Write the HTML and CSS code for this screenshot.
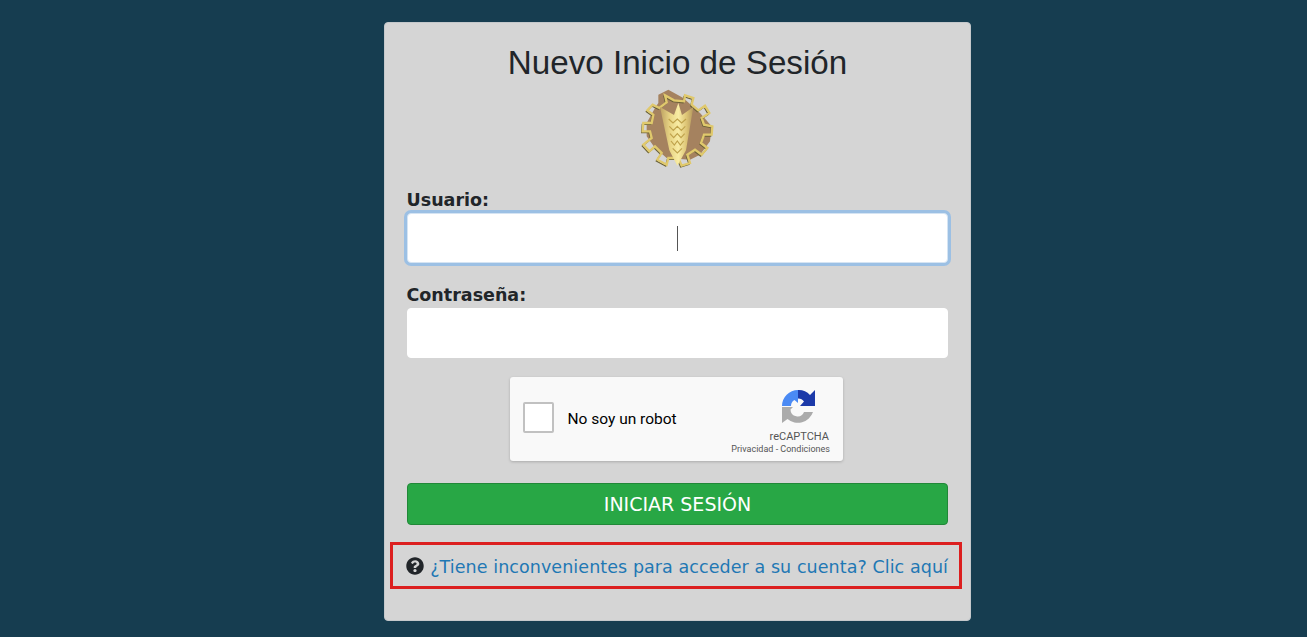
FILE: index.html
```html
<!DOCTYPE html>
<html lang="es">
<head>
<meta charset="utf-8">
<title>Nuevo Inicio de Sesión</title>
<link rel="stylesheet" href="styles.css">
</head>
<body>
<main class="card">
  <h1 class="title">Nuevo Inicio de Sesión</h1>
  <div class="logo-wrap">
    <svg class="logo" viewBox="120 28 228 240" width="76" height="80" aria-hidden="true">
      <defs>
        <filter id="soft" x="-5%" y="-5%" width="110%" height="110%"><feGaussianBlur stdDeviation="1.800"/></filter>
        <linearGradient id="wheat" x1="0" x2="1" y1="0" y2="0">
          <stop offset="0" stop-color="#bda162"/>
          <stop offset="0.300" stop-color="#e8d484"/>
          <stop offset="0.550" stop-color="#f8eca4"/>
          <stop offset="0.800" stop-color="#dcc374"/>
          <stop offset="1" stop-color="#b3975e"/>
        </linearGradient>
      </defs>
      <g filter="url(#soft)">
        <path d="M175 45 L205 30 L250 55 L300 100 L335 140 L330 185 L300 225 L270 240 L200 235 L165 205 L140 170 L140 130 L165 85 L175 70 Z" fill="#a5825f"/>
        <path d="M195 47 L222 62 L252 65 L255 47 L280 55 L275 75 L295 92 L315 78 L328 100 L305 115 L312 135 L337 140 L335 165 L312 165 L303 190 L322 205 L305 225 L285 210 L262 225 L270 250 L245 258 L235 235 L205 235 L200 255 L172 240 L185 220 L165 200 L148 215 L130 195 L155 175 L150 155 L128 155 L130 130 L155 130 L160 105 L142 92 L158 75 L178 85 L200 68 Z" fill="none" stroke="#6b6238" stroke-width="4" transform="translate(-3 4)"/>
        <path d="M195 47 L222 62 L252 65 L255 47 L280 55 L275 75 L295 92 L315 78 L328 100 L305 115 L312 135 L337 140 L335 165 L312 165 L303 190 L322 205 L305 225 L285 210 L262 225 L270 250 L245 258 L235 235 L205 235 L200 255 L172 240 L185 220 L165 200 L148 215 L130 195 L155 175 L150 155 L128 155 L130 130 L155 130 L160 105 L142 92 L158 75 L178 85 L200 68 Z" fill="none" stroke="#e0c96c" stroke-width="7"/>
        <path d="M180 82 L222 106 L235 70 L246 106 L280 82 L258 212 L232 258 L208 212 Z" fill="url(#wheat)"/>
        <path d="M206 118 L219 130 L232 118 L245 130 L258 118 M208 140 L220 152 L232 140 L244 152 L256 140 M210 162 L221 174 L232 162 L243 174 L254 162 M213 184 L223 196 L232 184 L241 196 L251 184 M218 206 L232 220 L246 206" fill="none" stroke="#bfa24c" stroke-width="3.500"/>
      </g>
    </svg>
  </div>
  <form class="form">
    <div class="field">
      <label class="label" for="user">Usuario:</label>
      <div class="input input-focus" id="user"><span class="caret"></span></div>
    </div>
    <div class="field field-last">
      <label class="label" for="pass">Contraseña:</label>
      <div class="input" id="pass"></div>
    </div>
    <div class="captcha-row">
      <div class="captcha">
        <span class="check"></span>
        <span class="robot">No soy un robot</span>
        <div class="brand">
          <svg class="rc-icon" viewBox="0 0 34 34" width="34" height="34" aria-hidden="true">
            <path d="M0 16 A16 16 0 0 1 16 0 L16 13 L12.500 10 A7 7 0 0 0 9 16 Z" fill="#4a8af4"/>
            <path d="M16 0 A16 16 0 0 1 28 5 L33 0 V16 H18 L22 11.500 A7 7 0 0 0 16 8.500 Z" fill="#1c3aa9"/>
            <path d="M0 17 H11 L8.500 19.500 A7 7 0 0 0 22 22 H31 A16 16 0 0 1 5.500 29 L0 33 Z" fill="#ababab"/>
          </svg>
          <span class="rc-name">reCAPTCHA</span>
          <span class="rc-links">Privacidad - Condiciones</span>
        </div>
      </div>
    </div>
    <button class="submit" type="button">INICIAR SESIÓN</button>
    <div class="help">
      <svg class="help-icon" viewBox="0 0 512 512" width="18" height="18" aria-hidden="true">
        <path fill="#212529" d="M504 256c0 136.997-111.043 248-248 248S8 392.997 8 256C8 119.083 119.043 8 256 8s248 111.083 248 248zM262.655 90c-54.497 0-89.255 22.957-116.549 63.758-3.536 5.286-2.353 12.415 2.715 16.258l34.699 26.31c5.205 3.947 12.621 3.008 16.665-2.122 17.864-22.658 30.113-35.797 57.303-35.797 20.429 0 45.698 13.148 45.698 32.958 0 14.976-12.363 22.667-32.534 33.976C247.128 238.528 216 254.941 216 296v4c0 6.627 5.373 12 12 12h56c6.627 0 12-5.373 12-12v-1.333c0-28.462 83.186-29.647 83.186-106.667 0-58.002-60.165-102-116.531-102zM256 338c-25.365 0-46 20.635-46 46 0 25.364 20.635 46 46 46s46-20.636 46-46c0-25.365-20.635-46-46-46z"/>
      </svg>
      <a class="help-link" href="#">¿Tiene inconvenientes para acceder a su cuenta? Clic aquí</a>
    </div>
  </form>
</main>
</body>
</html>
```
FILE: styles.css
```css
* { box-sizing: border-box; }
html, body { height: 100%; }
body {
  margin: 0;
  background: #163d50;
  font-family: "DejaVu Sans", sans-serif;
  color: #212529;
  overflow: hidden;
}
.card {
  width: 587px;
  height: 599px;
  margin: 22px 0 0 384px;
  background: #d5d5d5;
  border: 1px solid #c4c8cb;
  border-radius: 4px;
  padding: 19px 22px 0;
}
.title {
  margin: 0;
  font-family: "Liberation Sans", sans-serif;
  font-weight: 400;
  font-size: 33.200px;
  line-height: 41px;
  text-align: center;
}
.logo-wrap { display: flex; justify-content: center; margin-top: 6px; height: 80px; }
.logo { display: block; }
.form { margin-top: 20px; }
.field { margin-bottom: 21px; }
.field-last { margin-bottom: 19px; }
.label {
  display: block;
  font-weight: 700;
  font-size: 17.500px;
  line-height: 22px;
  margin: 0 0 2px -0.500px;
}
.input {
  height: 50px;
  background: #fff;
  border: 1px solid #fff;
  border-radius: 4px;
  display: flex;
  align-items: center;
  justify-content: center;
}
.input-focus {
  box-shadow: 0 0 0 3px #9cc0e4;
  border-color: #d5e4f3;
}
.caret { width: 1px; height: 25px; background: #555; }
.captcha-row { display: flex; justify-content: center; padding-right: 2px; }
.captcha {
  width: 333px;
  height: 84px;
  background: #f9f9f9;
  border-radius: 3px;
  box-shadow: 0 1px 3px rgba(0,0,0,.2);
  display: flex;
  align-items: center;
  padding-left: 13px;
  position: relative;
  font-family: Roboto, sans-serif;
}
.check {
  width: 31px;
  height: 31px;
  background: #fff;
  border: 2px solid #c1c1c1;
  border-radius: 2px;
  margin-top: -3px;
}
.robot { margin-left: 13.500px; font-size: 15.500px; color: #000; }
.brand {
  position: absolute;
  right: 13px;
  top: 13px;
  display: flex;
  flex-direction: column;
  align-items: flex-end;
  color: #555;
}
.rc-icon { display: block; margin-right: 14px; }
.rc-name { font-size: 11px; line-height: 13px; margin-top: 6px; margin-right: 1px; }
.rc-links { font-size: 9px; line-height: 12px; }
.submit {
  display: block;
  width: 100%;
  height: 42px;
  margin-top: 22px;
  background: #28a745;
  border: 1px solid #218838;
  border-radius: 4px;
  color: #fff;
  font-family: "DejaVu Sans", sans-serif;
  font-size: 19px;
  padding: 0;
}
.help {
  margin: 17px -14px 0 -17px;
  height: 47px;
  border: 3px solid #dc1f1f;
  display: flex;
  align-items: center;
  justify-content: flex-end;
  padding-right: 11px;
  gap: 6px;
}
.help-link { color: #1f78b4; text-decoration: none; font-size: 17.500px; letter-spacing: 0.070px; white-space: nowrap; padding-top: 2px; }
.help-icon { display: block; flex: none; }
```
